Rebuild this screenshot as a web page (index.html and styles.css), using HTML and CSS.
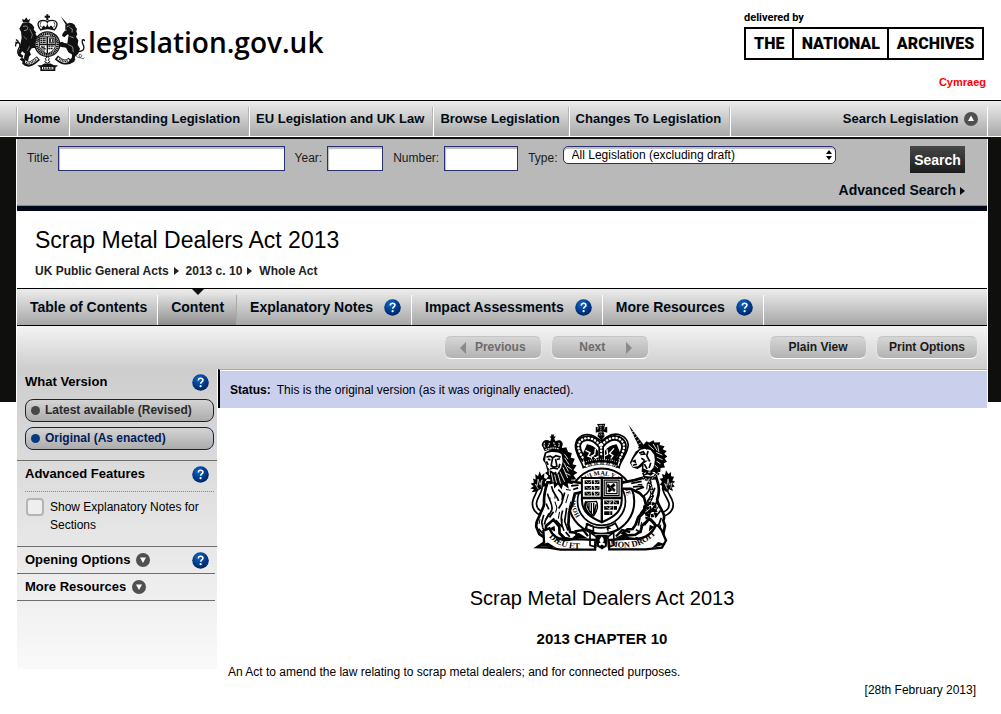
FILE: index.html
```html
<!DOCTYPE html>
<html lang="en">
<head>
    <meta charset="UTF-8">
    <meta name="viewport" content="width=device-width, initial-scale=1.0">
    <title>Scrap Metal Dealers Act 2013</title>
    <link rel="stylesheet" href="styles.css">
</head>
<body>
    <!-- shared icons -->
    <svg class="defs" width="0" height="0" aria-hidden="true">
        <defs>
            <radialGradient id="helpFill" cx="0.4" cy="0.3" r="0.8">
                <stop offset="0" stop-color="#1267c4"/>
                <stop offset="0.5" stop-color="#003f92"/>
                <stop offset="1" stop-color="#001c50"/>
            </radialGradient>
            <symbol id="help" viewBox="0 0 17 17">
                <circle cx="8.5" cy="8.5" r="8.3" fill="url(#helpFill)"/>
                <path d="M6.3 6.5c.1-1.5 1-2.2 2.300-2.200s2.300.8 2.300 1.900c0 1.700-2.200 1.700-2.200 3.500" fill="none" stroke="#fff" stroke-width="1.600"/>
                <circle cx="8.600" cy="12.200" r="1.100" fill="#fff"/>
            </symbol>
            <symbol id="up" viewBox="0 0 14 14">
                <circle cx="7" cy="7" r="7" fill="#505050"/>
                <path d="M7 3.500l3 5.500H4z" fill="#fff"/>
            </symbol>
            <symbol id="down" viewBox="0 0 14 14">
                <circle cx="7" cy="7" r="7" fill="#505050"/>
                <path d="M4 4.500h6L7 10z" fill="#fff"/>
            </symbol>
        </defs>
    </svg>

    <header class="site-header">
        <a class="logo" href="#">
            <svg class="logo-arms" viewBox="14 16 210 170" aria-hidden="true">
                <!-- lion -->
                <path d="M35 31l3 10h18l4-12-7 5-5-9-5 8z"/>
                <path d="M36 43l19-3 10 6 7 10-2 6 8 10-3 3 7 10-5 2 5 9-9 8 12-2 12 4 2 6-20 5-15 1-6 10 4 9-6 7-3 13 8 8-4 7-14-9-2-17 3-12-7-5-9-14 6-28-2-18-5-9z"/>
                <path d="M34 112c-8 8-13 17-11 28l13 8 3-7-8-6 7-12 6-5z"/>
                <path d="M30 142c-8-4-10-14-5-23 6-8 4-17-2-18-6 0-8 6-7 12M25 99l-8-7M25 100l-10 1" fill="none" stroke="#111" stroke-width="4"/>
                <path d="M38 53l10-2 5 6-4 7-8 1" fill="none" stroke="#fff" stroke-width="1.500"/>
                <path d="M58 60l8 17-3 12M40 83l10 9M50 127l8-15" fill="none" stroke="#fff" stroke-width="1.200"/>
                <!-- unicorn -->
                <path d="M151 22l20 22-5 3z"/>
                <path d="M165 47l13-5 8 1 7 5 3 7 4 5-2 7 3 9-4 8 7 10-2 14 7 12-5 14-10 10-2 15-17 8-3-7 12-9 1-14-11-7-7-13-17-3-10-7 1-5 20 1 10 1 2-14 2-12-4-1-9 8-7-4 2-7 8-10z"/>
                <path d="M199 128c18 2 24-6 21-17-5-10-7-13 0-19M219 92l-5 3M219 92l7 5M143 105l12-4 13 7" fill="none" stroke="#111" stroke-width="4"/>
                <path d="M169 54l9-4M164 65l6-2M178 56l8 5-1 10M178 83l12 4M174 107l13 7 2 16" fill="none" stroke="#fff" stroke-width="1.500"/>
                <!-- crown -->
                <path d="M108 16h6v5h5v6h-5v7h-6v-7h-5v-6h5z"/>
                <path d="M91 63c-17-22-4-31 16-27l4 4 4-4c22-5 34 6 17 27-12-6-27-6-41 0z" fill="#fff" stroke="#111" stroke-width="4"/>
                <path d="M93 39c-5 6-4 12 1 17M130 39c5 6 4 12-1 17M111 40v14" fill="none" stroke="#111" stroke-width="3" stroke-dasharray="3 1.500"/>
                <path d="M94 57l6-7 6 5 5-7 5 7 6-5 7 7-1 7c-11-4-22-4-33 0z"/>
                <path d="M94 66c12-4 24-4 35 0" fill="none" stroke="#fff" stroke-width="1.500" stroke-dasharray="3 2"/>
                <!-- garter and shield -->
                <circle cx="111" cy="106" r="37" fill="#fff" stroke="#111" stroke-width="4"/>
                <circle cx="111" cy="106" r="31" fill="none" stroke="#111" stroke-width="8" stroke-dasharray="4 1.500"/>
                <path d="M87 84h48v24c0 14-11 22-24 27-13-5-24-13-24-27z" fill="#fff" stroke="#111" stroke-width="3"/>
                <path d="M111 84v50M87 107h48" stroke="#111" stroke-width="4"/>
                <path d="M90 89h18M90 95h18M90 101h18M114 112h17M114 119h13" stroke="#111" stroke-width="4" stroke-dasharray="6 1.500"/>
                <path d="M117 88h14v14h-14zM121 90v10M127 90v10M95 111v14M101 111v18M92 113l15 8" fill="none" stroke="#111" stroke-width="3"/>
                <!-- ribbon -->
                <path d="M40 158c14 17 29 3 44-10M180 151c-13 17-28 6-42-5" fill="none" stroke="#111" stroke-width="15"/>
                <path d="M43 157c13 13 25 3 38-8M176 153c-11 12-22 3-34-5" fill="none" stroke="#fff" stroke-width="7"/>
                <path d="M47 161c11 6 20-1 32-10M172 156c-10 6-18-1-27-7" fill="none" stroke="#111" stroke-width="5" stroke-dasharray="3 2"/>
                <path d="M28 151c7-7 13-4 17 5l-1 9zM196 151c-8-8-14-4-19 5l2 9z"/>
                <path d="M81 169h12l9-5h19l10 5h12l-8 8v10H90v-10z"/>
                <path d="M95 178h34" stroke="#fff" stroke-width="7"/>
                <path d="M98 178h29" stroke="#111" stroke-width="5" stroke-dasharray="3 2"/>
                <path d="M111 143l6 7-3 4 5 5-8 4-8-4 5-5-3-4z" fill="#fff" stroke="#111" stroke-width="3"/>
                <path d="M197 139c1 8 14 10 17 3 2-6-8-8-8-2 0 7 13 12 16 7" fill="none" stroke="#111" stroke-width="2"/>
            </svg>
            <span>legislation.gov.uk</span>
        </a>
        <div class="header-side">
            <a class="archives" href="#">
                <span class="delivered">delivered by</span>
                <span class="archives-box"><b>THE</b><b>NATIONAL</b><b>ARCHIVES</b></span>
            </a>
            <a class="language" href="#">Cymraeg</a>
        </div>
    </header>

    <nav class="primary-nav">
        <ul>
            <li><a href="#">Home</a></li>
            <li><a href="#">Understanding Legislation</a></li>
            <li><a href="#">EU Legislation and UK Law</a></li>
            <li><a href="#">Browse Legislation</a></li>
            <li><a href="#">Changes To Legislation</a></li>
            <li class="search-toggle"><a href="#search">Search Legislation <svg class="arrow-icon"><use href="#up"/></svg></a></li>
        </ul>
    </nav>

    <div class="backdrop">
        <div class="page">
            <form class="search" id="search">
                <div class="search-fields">
                    <label for="title">Title:</label>
                    <input class="field-title" type="text" id="title">
                    <label for="year">Year:</label>
                    <input class="field-year" type="text" id="year">
                    <label for="number">Number:</label>
                    <input class="field-number" type="text" id="number">
                    <label for="type">Type:</label>
                    <div class="select-wrap">
                        <select id="type">
                            <option>All Legislation (excluding draft)</option>
                        </select>
                        <svg viewBox="0 0 6 10" aria-hidden="true"><path d="M3 0l3 4H0zM3 10l3-4H0z"/></svg>
                    </div>
                    <button class="search-btn" type="submit">Search</button>
                </div>
                <a class="advanced" href="#">Advanced Search <i class="caret"></i></a>
            </form>

            <div class="title-block">
                <h1>Scrap Metal Dealers Act 2013</h1>
                <ul class="breadcrumb">
                    <li><a href="#">UK Public General Acts</a><i class="caret"></i></li>
                    <li><a href="#">2013 c. 10</a><i class="caret"></i></li>
                    <li>Whole Act</li>
                </ul>
            </div>

            <ul class="tabs">
                <li><a href="#">Table of Contents</a></li>
                <li class="active"><a href="#">Content</a></li>
                <li><a href="#">Explanatory Notes</a><a class="help" href="#" aria-label="Help"><svg><use href="#help"/></svg></a></li>
                <li><a href="#">Impact Assessments</a><a class="help" href="#" aria-label="Help"><svg><use href="#help"/></svg></a></li>
                <li><a href="#">More Resources</a><a class="help" href="#" aria-label="Help"><svg><use href="#help"/></svg></a></li>
            </ul>

            <div class="toolbar">
                <button class="tool" type="button" disabled><svg viewBox="0 0 6 12"><path d="M6 0v12L0 6z"/></svg>Previous</button>
                <button class="tool next" type="button" disabled>Next<svg viewBox="0 0 6 12"><path d="M0 0v12l6-6z"/></svg></button>
                <button class="tool view" type="button">Plain View</button>
                <button class="tool" type="button">Print Options</button>
            </div>

            <div class="columns">
                <aside class="sidebar">
                    <section class="version">
                        <h2>What Version <a class="help" href="#" aria-label="Help"><svg><use href="#help"/></svg></a></h2>
                        <a class="version-btn" href="#">Latest available (Revised)</a>
                        <a class="version-btn current" href="#">Original (As enacted)</a>
                    </section>
                    <section class="features">
                        <h2>Advanced Features <a class="help" href="#" aria-label="Help"><svg><use href="#help"/></svg></a></h2>
                        <div class="check-row">
                            <input type="checkbox" id="notes">
                            <label for="notes">Show Explanatory Notes for Sections</label>
                        </div>
                    </section>
                    <section class="closed">
                        <h2><a href="#">Opening Options <svg class="arrow-icon"><use href="#down"/></svg></a> <a class="help" href="#" aria-label="Help"><svg><use href="#help"/></svg></a></h2>
                    </section>
                    <section class="closed">
                        <h2><a href="#">More Resources <svg class="arrow-icon"><use href="#down"/></svg></a></h2>
                    </section>
                </aside>

                <main>
                    <p class="status"><strong>Status:</strong> This is the original version (as it was originally enacted).</p>
                    <div class="act">
                        <svg class="arms" viewBox="34 29 434 379" role="img" aria-label="Royal arms">
                            <defs>
                                <path id="garterPath" d="M185 305A77 77 0 1 1 311 305"/>
                                <path id="mottoLeft" d="M92 366C125 405 180 408 230 392"/>
                                <path id="mottoRight" d="M272 393C325 405 380 396 414 350"/>
                            </defs>
                            <!-- tails -->
                            <g fill="none" stroke="#000" stroke-width="17">
                                <path d="M94 300c-25 2-48-12-44-37 3-20 23-35 14-58"/>
                                <path d="M402 300c28 6 55-8 52-33-3-20-28-36-15-64"/>
                            </g>
                            <g fill="none" stroke="#fff" stroke-width="7">
                                <path d="M94 300c-25 2-48-12-44-37 3-20 23-35 14-58"/>
                                <path d="M402 300c28 6 55-8 52-33-3-20-28-36-15-64"/>
                            </g>
                            <path d="M56 232l-15 2 7-9-11-2 10-7-9-7 10-4-3-12 8 3-1-16 8 7 5-15 5 13 9-8-1 15 9 3-7 10 5 6-8 8-6-9-2 14zM438 232l-12-9 4-7-9-4 6-9-7-9 10-2-3-12 9 3 3-14 7 11 8-6v13l9 1-5 11 8 4-8 6 7 8-9 3 4 10-12-5-4 8z"/>
                            <path d="M61 225l-9-15 6 4 2-19 6 17 6-15-3 20M443 225l-8-17 7 6 3-19 4 18 7-7-3 17" fill="none" stroke="#fff" stroke-width="2"/>
                            <!-- garter -->
                            <circle cx="248" cy="261" r="97" fill="#fff" stroke="#000" stroke-width="6"/>
                            <circle cx="248" cy="261" r="71" fill="#fff" stroke="#000" stroke-width="5"/>
                            <text class="garter-text"><textPath href="#garterPath">HONI SOIT QUI MAL Y PENSE</textPath></text>
                            <!-- lion body -->
                            <path d="M88 205c-8 25-11 42-10 58 2 17-9 23-13 40-6 13-12 17-10 34l9 21 18 12 18-4-2-12-15-8 1-12 22-19 17 21 1 20 14 14 26 4 15-9-7-11-17-2-5-22 2-35 10-29 7-28 27-6 12-12-12-12-33-5z" fill="#fff" stroke="#000" stroke-width="8"/>
                            <path d="M88 238c5 20 17 32 13 48-6 18-20 21-22 44M100 216c3 22 17 28 21 44M120 226c12 10 15 17 11 31M139 235l-9 33-9 14M133 288c-7 20-4 42 4 60M145 280l-6 40 10 27M77 301l-6 22 3 14M106 292l-12 17M84 268l8 17M164 226l15-5M158 215l22-2M113 317l19 20M62 342l12 14M73 338l10 15M127 356l12 12M142 352l12 14" fill="none" stroke="#000" stroke-width="5"/>
                            <path d="M110 262l6 18-4 14M124 292l-4 20M92 296l-9 17M150 240l-8 26M111 241l-1 12M66 314l-3 14M157 262l-6 26M143 226l14 2M96 250l-2 8M132 312l-2 14" fill="none" stroke="#000" stroke-width="3"/>
                            <!-- lion head and mane -->
                            <path d="M80 116l-6 22 8 12 6 22-7 5 10 9-6 8 12 2-3 16 12-6 2 17 11-12 11 15 4-15 17 13-3-17 16 4-7-14 17-1-9-12 12-8-12-7 9-15-12-3 7-16-12-3 3-14-11-3-5-14-12 2-10-9-14 8z"/>
                            <path d="M84 120c10-7 35-7 46 2l3 22-5 18-11 17-16-4-12-15-8-20z" fill="#fff"/>
                            <path d="M85 130l11-3 8 5 9-6 14 4M103 134l-4 21 7 5 10-3-4-22M89 136l8 2M116 137l9-2M96 165l9-3 15 3M98 172l9 7 7-4M90 153l-5-10M125 150l-4 12" fill="none" stroke="#000" stroke-width="5"/>
                            <path d="M138 121l11 15M139 132l13 20M136 146l14 26M134 160l14 32M125 173l14 30M119 180l8 28M109 182l6 24M100 178l5 27M142 177l14 7M146 157l14 10M93 167l1 16" fill="none" stroke="#fff" stroke-width="2.500"/>
                            <!-- lion crown -->
                            <path d="M80 113l-9-19c2-14 14-18 25-11l3-8-5-6h5v-6h8v6h6l-5 7 4 7c12-7 23 0 21 12l-7 17c-14-7-32-7-46 1z"/>
                            <path d="M80 88c-4 4-2 9 1 14M94 88l-5 12M106 87l6 12M121 88c4 4 2 8-1 12M82 108c14-6 28-6 41-2" fill="none" stroke="#fff" stroke-width="3" stroke-dasharray="5 2"/>
                            <!-- unicorn body -->
                            <path d="M411 193c8 20 9 43 2 62-1 13 8 20 13 31 7 13 10 20 5 32l5 15-5 24-17 16-14-9 7-15-1-20-16-16-22 20-4 17-16 10-21 2-16-7 14-11 15-1 9-13 8-22 17-20 7-13-7-25-14-14-25-12-29-1-7-8 13-10 34-7 29-8z" fill="#fff" stroke="#000" stroke-width="8"/>
                            <path d="M406 221c-5 17-13 29-23 41M394 202c0 23-9 36-21 43M411 262c-3 16-20 28-23 42M423 288l-16 21M425 310l-10 28M377 292l-15 16-5 25M394 313l13 14M336 208l31-6M341 218l29-2M350 227l24-8M376 280l-12 16M392 275l4 17M413 352l15-4M350 345l16 9" fill="none" stroke="#000" stroke-width="5"/>
                            <path d="M384 206l-2 20M403 243l-8 16M417 276l-10 14M384 322l-8 10M424 330l-4 14M367 322l-3 14M355 212l14-2M389 262l-4 10" fill="none" stroke="#000" stroke-width="3"/>
                            <!-- chain -->
                            <path d="M369 188c14 14 35 7 47-12M389 201c15 41 5 54-4 67-8 15 17 30 21 12 3-20-35-18-30 6 6 29 41 16 32 5-8-12-32 6-24 22" fill="none" stroke="#000" stroke-width="10" stroke-dasharray="8 2"/>
                            <path d="M369 188c14 14 35 7 47-12M389 201c15 41 5 54-4 67" fill="none" stroke="#fff" stroke-width="2.500" stroke-dasharray="5 5"/>
                            <!-- unicorn head and mane -->
                            <path d="M365 102l16-19 8 4 13-7 3 7 17-1-2 8 15 4-6 9 12 5-7 8 9 8-8 6 7 10-10 5 4 12-13 1-1 12-14-1-14 12-27-12 1-16-13 8-15-4-8-14 7-16 10-17z"/>
                            <path d="M362 109l14-4 17 4 11 14 2 17-4 21-10 11-20-8 1-15 13-9-13 1-17 16-15 2-5-10 8-16z" fill="#fff"/>
                            <path d="M359 118l13-4 4 7-13 1M340 144l7-4 2 8M341 154l12-3M366 133l10 7M386 112l-4 14 9 17M394 147l-5 15M357 103l15-4 12 7M375 151l8 14" fill="none" stroke="#000" stroke-width="5"/>
                            <path d="M387 94l16 14M401 91l12 20M414 94l4 21M410 116l18 8M412 130l17 8M411 142l12 8M405 153l10 9" fill="none" stroke="#fff" stroke-width="2.500"/>
                            <path d="M328 34l33 70 13-9z"/>
                            <path d="M338 55l6-2M342 64l7-4M347 73l7-5M352 83l8-5M357 92l8-4" stroke="#fff" stroke-width="2"/>
                            <path d="M368 177c16-8 31-9 45-6l2 8c-15-3-29 0-43 8z"/>
                            <path d="M374 179l6-3M386 175l7-1M399 175l8 1" stroke="#fff" stroke-width="3"/>
                            <!-- shield -->
                            <path d="M190 192h118v66c0 35-27 51-59 65-32-14-59-30-59-65z" fill="#fff" stroke="#000" stroke-width="6"/>
                            <path d="M249 192v130M190 251h118" stroke="#000" stroke-width="7"/>
                            <g fill="none" stroke="#000" stroke-width="11">
                                <path d="M198 204h44M198 221h44M198 238h44" stroke-dasharray="19 2 7 2"/>
                                <path d="M256 264h44M256 280h38M256 296h24" stroke-dasharray="16 2 8 2"/>
                            </g>
                            <path d="M201 200l9 7 8-6M223 200l10 7 7-6M201 217l9 7 8-6M223 217l10 7 7-6M201 234l9 7 8-6M223 234l10 7 7-6M260 260l10 7 9-6M284 260l10 7M260 276l10 7 9-6" fill="none" stroke="#fff" stroke-width="2"/>
                            <path d="M256 198h44v46h-44zM262 204h32v34h-32z" fill="none" stroke="#000" stroke-width="3.500"/>
                            <path d="M267 207l7 8 11-9 5 9-7 5 7 7-4 7-7-5-7 6-7-3 4-8-7-7zM274 219l9 11" fill="#000" stroke="#fff" stroke-width="1"/>
                            <path d="M204 263l29-2c7 14 4 26-8 43-11-9-20-22-21-41zM211 266v20M218 266v29M225 266v33M232 270l-5 26" fill="none" stroke="#000" stroke-width="4"/>
                            <path d="M203 261c-10 15 2 36 19 45" fill="none" stroke="#000" stroke-width="6"/>
                            <!-- buckle strap -->
                            <path d="M207 328c26 16 55 15 82-2l9 17c-31 17-67 17-99 1z" fill="#fff" stroke="#000" stroke-width="5"/>
                            <path d="M267 332v18M263 341h12M271 335l-6 11" stroke="#000" stroke-width="4"/>
                            <path d="M204 328l20 8v14l-20-7z" fill="none" stroke="#000" stroke-width="5"/>
                            <!-- ribbon -->
                            <path d="M76 348l18-7c11 29 38 39 75 32l61 2-1 29H126l-35-6-34-1 21-14zM416 333l10 13 13 31-12 21-49 5H271l-2-27 63-5c36 5 62-5 77-39z" fill="#fff" stroke="#000" stroke-width="7"/>
                            <path d="M61 392l28-9 26 16zM438 388l-22-7-20 19zM161 369l19-15 28 17zM286 371l29-15 22 17zM93 342l16-9 2 17zM405 337l-14-7-3 20z"/>
                            <path d="M168 350l26-4 14 18M333 352l-24-6-18 19M115 375l22-6M366 374l-18-5" fill="none" stroke="#000" stroke-width="7"/>
                            <text class="motto"><textPath href="#mottoLeft">DIEU ET</textPath></text>
                            <text class="motto"><textPath href="#mottoRight">MON DROIT</textPath></text>
                            <path d="M231 359h37l-3 36-15 9-17-9z" stroke="#fff" stroke-width="2"/>
                            <path d="M249 365c10 11 5 16 1 20 10-3 10 4 6 8l-7-4-6 4c-5-5-4-10 4-9-5-4-8-9 2-19z" fill="#fff"/>
                            <path d="M214 353l19 13-2 30-17-5zM284 353l-17 13 2 30 16-5z" fill="none" stroke="#000" stroke-width="5"/>
                            <!-- crown -->
                            <path d="M194 161c-2-15-26-42-23-68 4-25 31-39 58-23l19 12 16-12c28-18 61-2 63 23 1 25-25 50-27 68-34-17-73-16-106 0z" fill="#fff" stroke="#000" stroke-width="5"/>
                            <path d="M198 140c-20-29-27-50-7-62 19-10 39-2 55 20 16-22 38-31 56-21 21 13 13 37-4 64M247 91v45" fill="none" stroke="#000" stroke-width="17"/>
                            <path d="M198 140c-20-29-27-50-7-62 19-10 39-2 55 20 16-22 38-31 56-21 21 13 13 37-4 64M247 91v45" fill="none" stroke="#fff" stroke-width="7" stroke-linecap="round" stroke-dasharray="1 9"/>
                            <path d="M205 92c13 1 24 8 33 20v26h-35l-10-18zM293 92c-15 1-27 8-35 20v26h32l13-22z"/>
                            <path d="M201 110l13 7-6 10 10 4 3 9M230 105l-2 17-9 5 11 6 9-6M285 104l-13 15 10 7-8 10M264 107l2 15-8 4" fill="none" stroke="#fff" stroke-width="4"/>
                            <path d="M195 137l10-8 11 12 7-14 9 13 6-4 8-14 8 14 8 4 9-13 8 14 9-12 12 9-6 24c-30-13-62-13-93 0z"/>
                            <path d="M197 145c33-12 68-12 99 0" fill="none" stroke="#fff" stroke-width="3" stroke-dasharray="2 4"/>
                            <path d="M201 157c29-11 62-11 91 0" fill="none" stroke="#fff" stroke-width="6" stroke-dasharray="9 3 3 3"/>
                            <path d="M235 32l24-1-3 12 9-3v18l-10-3 2 13-9 12-12-12 4-13-9 3V40l9 3z"/>
                            <path d="M240 37h15M246 34v26M241 56h14M235 46h6M255 46h6M240 64h14" fill="none" stroke="#fff" stroke-width="2" stroke-dasharray="4 2"/>
                        </svg>
                        <h1>Scrap Metal Dealers Act 2013</h1>
                        <h2>2013 CHAPTER 10</h2>
                        <p>An Act to amend the law relating to scrap metal dealers; and for connected purposes.</p>
                        <p class="date">[28th February 2013]</p>
                    </div>
                </main>
            </div>
        </div>
    </div>
</body>
</html>
```
FILE: styles.css
```css
:root {
    --ink: #000a14;
    --navy: #00081a;
    --field-border: #2b3070;
    --rule: #6e6e6e;
    --bar: linear-gradient(#ededed, #a6a6a6);
}

* {
    box-sizing: border-box;
    margin: 0;
    padding: 0;
}

body {
    font-family: "Liberation Sans", Arial, sans-serif;
    font-size: 12px;
    line-height: 18px;
    color: #000;
    background: #fff;
}

a {
    color: inherit;
    text-decoration: none;
}

ul {
    list-style: none;
}

button,
input,
select {
    font-family: inherit;
}

.defs {
    position: absolute;
}

/* header */
.site-header {
    display: flex;
    justify-content: space-between;
    align-items: flex-start;
    height: 100px;
    padding: 12px 15px 0;
}

.logo {
    display: flex;
    align-items: center;
    gap: 3px;
    font: 600 28px/60px "Open Sans", sans-serif;
    color: #000;
}

.logo-arms {
    width: 70px;
    height: 57px;
    fill: #111;
}

.header-side {
    display: flex;
    flex-direction: column;
    align-items: flex-end;
    gap: 13px;
}

.archives {
    margin-right: 2px;
    font-family: Roboto, "Liberation Sans", sans-serif;
    font-weight: bold;
}

.delivered {
    display: block;
    margin-bottom: 3px;
    font-size: 11px;
    line-height: 12px;
}

.archives-box {
    display: flex;
    width: 240px;
    border: 2px solid #000;
    font-size: 16px;
    line-height: 29px;
}

.archives-box b {
    flex: 2 0 0;
    text-align: center;
}

.archives-box b:first-child {
    flex-grow: 1;
}

.archives-box b + b {
    border-left: 2px solid #000;
}

.language {
    color: #f00;
    font-size: 11px;
    font-weight: bold;
}

/* primary navigation */
.primary-nav {
    border-top: 1px solid #000;
    border-bottom: 2px solid #0c120c;
    background: var(--bar);
    box-shadow: inset 0 -1px #fff;
}

.primary-nav ul {
    display: flex;
    padding: 6px 13px 1px 17px;
    font-size: 13px;
    font-weight: bold;
    color: var(--ink);
}

.primary-nav li {
    border-left: 1px solid #fff;
    box-shadow: -1px 0 #b4b4b4;
    padding: 3px 9px 8px 6px;
}

.primary-nav .search-toggle {
    flex: 1;
    border-right: 1px solid #fff;
    text-align: right;
}

.arrow-icon {
    width: 14px;
    height: 14px;
    margin-left: 2px;
    vertical-align: -3px;
}

/* black side bands behind the top of the page */
.backdrop {
    padding: 0 13px 0 16px;
    background: linear-gradient(#0f0f0d, #0f0f0d) no-repeat 0 0 / 100% 263px;
}

.page {
    background: #fff;
    border: solid #fff;
    border-width: 0 1px;
}

/* search */
.search {
    padding: 7px 22px 6px 10px;
    background: #b9b9b9;
    border-bottom: 5px solid var(--navy);
    box-shadow: inset 0 -1px #888;
    color: #1a1a1a;
}

.search-fields {
    display: flex;
    align-items: flex-start;
    min-height: 34px;
}

.search-fields label {
    line-height: 25px;
    margin: 0 5px 0 10px;
}

.search-fields label:first-child {
    margin-left: 0;
}

.search-fields input {
    height: 25px;
    border: 1px solid var(--field-border);
    background: #fff;
    box-shadow: inset 1px 2px 1px #bbb;
}

.field-title {
    width: 227px;
}

.field-year {
    width: 56px;
}

.field-number {
    width: 74px;
}

.select-wrap {
    position: relative;
}

.select-wrap select {
    display: block;
    width: 273px;
    height: 18px;
    padding: 0 8px;
    appearance: none;
    border: 1px solid var(--field-border);
    border-radius: 5px;
    background: #fff;
    box-shadow: inset 0 2px 1px #bbb;
    font-size: 12px;
    color: #000;
}

.select-wrap svg {
    position: absolute;
    top: 4px;
    right: 4px;
    width: 6px;
    height: 10px;
}

.search-btn {
    width: 55px;
    height: 27px;
    margin-left: auto;
    border: 0;
    background: linear-gradient(#484848, #1c1c1c);
    color: #fff;
    font-size: 14px;
    font-weight: bold;
}

.advanced {
    display: block;
    text-align: right;
    font-size: 14px;
    line-height: 20px;
    font-weight: bold;
    color: var(--ink);
}

.caret {
    display: inline-block;
    border-left: 5px solid currentColor;
    border-top: 4px solid transparent;
    border-bottom: 4px solid transparent;
}

/* title */
.title-block {
    padding: 14px 18px 8px;
}

.title-block h1 {
    font-size: 23px;
    line-height: 30px;
    font-weight: normal;
}

.breadcrumb {
    display: flex;
    gap: 7px;
    margin-top: 7px;
    font-weight: bold;
    color: #222;
}

.breadcrumb .caret {
    margin-left: 5px;
}

/* tabs */
.tabs {
    display: flex;
    border-top: 1px solid #000;
    border-bottom: 1px solid #000;
    background: var(--bar);
    font-size: 14px;
    font-weight: bold;
    color: var(--ink);
}

.tabs li {
    position: relative;
    display: flex;
    align-items: center;
    gap: 11px;
    height: 36px;
    padding: 0 11px 0 13px;
}

/* the dividers stop short of the top edge */
.tabs li::after {
    content: "";
    position: absolute;
    top: 6px;
    right: 0;
    bottom: 0;
    border-right: 1px solid #fff;
}

.tabs .active {
    padding-right: 13px;
    background: linear-gradient(#efefef, #8f8f8f);
}

.tabs .active::after {
    border-color: #aaa;
}

.tabs .active::before {
    content: "";
    position: absolute;
    top: 0;
    left: 50%;
    margin-left: -6px;
    border: 6px solid transparent;
    border-top-color: #111;
    border-bottom: 0;
}

.help,
.help svg {
    display: block;
    width: 17px;
    height: 17px;
}

/* toolbar */
.toolbar {
    display: flex;
    gap: 9px;
    padding: 10px 9px 10px 44%;
    background: linear-gradient(#f4f4f4, #cdcdcd);
}

.tool {
    width: 98px;
    height: 23px;
    padding-bottom: 2px;
    border: 1px solid;
    border-color: #c4c4c4 #e4e4e4 #fff;
    border-radius: 7px;
    background: linear-gradient(#d6d6d6, #b2b2b2);
    color: #1a1a1a;
    font-size: 12px;
    font-weight: bold;
    white-space: nowrap;
}

.tool:disabled {
    color: #6b6b6b;
}

.tool svg {
    width: 6px;
    height: 12px;
    margin-right: 9px;
    vertical-align: -3px;
    fill: #8a8a8a;
}

.tool.next svg {
    margin: 0 0 0 21px;
}

.tool.next {
    padding-left: 12px;
}

.tool.view {
    margin-left: auto;
}

.tool.view + .tool {
    width: 102px;
}

/* columns */
.columns {
    display: flex;
    align-items: flex-start;
}

.sidebar {
    flex: 0 0 200px;
    padding-bottom: 68px;
    background: linear-gradient(#cdcdcd, #fafafa);
}

.sidebar section {
    padding: 4px 3px 0 8px;
    border-bottom: 1px solid var(--rule);
}

.sidebar h2 {
    display: flex;
    justify-content: space-between;
    align-items: center;
    padding-right: 5px;
    font-size: 13px;
    line-height: 18px;
}

.sidebar .version {
    padding-bottom: 10px;
}

.sidebar .features {
    padding-bottom: 12px;
}

.sidebar .closed {
    margin-right: 2px;
    padding: 4px 1px 4px 8px;
}

.version-btn {
    display: block;
    margin-top: 5px;
    padding-left: 5px;
    border: 1px solid #222;
    border-radius: 8px;
    background: linear-gradient(#d4d4d4, #acacac);
    font-weight: bold;
    line-height: 21px;
    color: #2a2a2a;
}

.version h2 + .version-btn {
    margin-top: 8px;
}

.version-btn::before {
    content: "";
    display: inline-block;
    width: 9px;
    height: 9px;
    margin-right: 5px;
    border-radius: 50%;
    background: #484848;
    vertical-align: -1px;
}

.version-btn.current {
    border-color: #00285e;
    color: #00205a;
}

.version-btn.current::before {
    background: #003a85;
}

.check-row {
    display: flex;
    gap: 5px;
    margin-top: 8px;
    padding-top: 6px;
    border-top: 1px dotted #888;
}

.check-row input {
    flex: none;
    width: 18px;
    height: 18px;
    margin: 0 1px;
    appearance: none;
    border: 2px solid #b4b4b4;
    border-radius: 4px;
    background: #eee;
}

main {
    flex: 1;
}

.status {
    padding: 11px 10px 9px;
    border-top: 1px solid #aaa;
    border-left: 2px solid #000;
    margin-left: 1px;
    background: #cacfec;
    box-shadow: inset 0 1px #fff;
}

.status strong {
    margin-right: 3px;
}

/* act */
.act {
    padding: 15px 11px;
}

.arms {
    display: block;
    width: 147px;
    height: 128px;
    margin: 0 auto;
}

.garter-text {
    font: bold 19px "Liberation Serif", serif;
}

.motto {
    font: bold 25px "Liberation Serif", serif;
}

.act h1 {
    margin-top: 32px;
    font-size: 20px;
    line-height: 30px;
    font-weight: normal;
    text-align: center;
}

.act h2 {
    margin: 16px 0 14px;
    font-size: 15px;
    line-height: 20px;
    text-align: center;
}

.act .date {
    text-align: right;
}
```
